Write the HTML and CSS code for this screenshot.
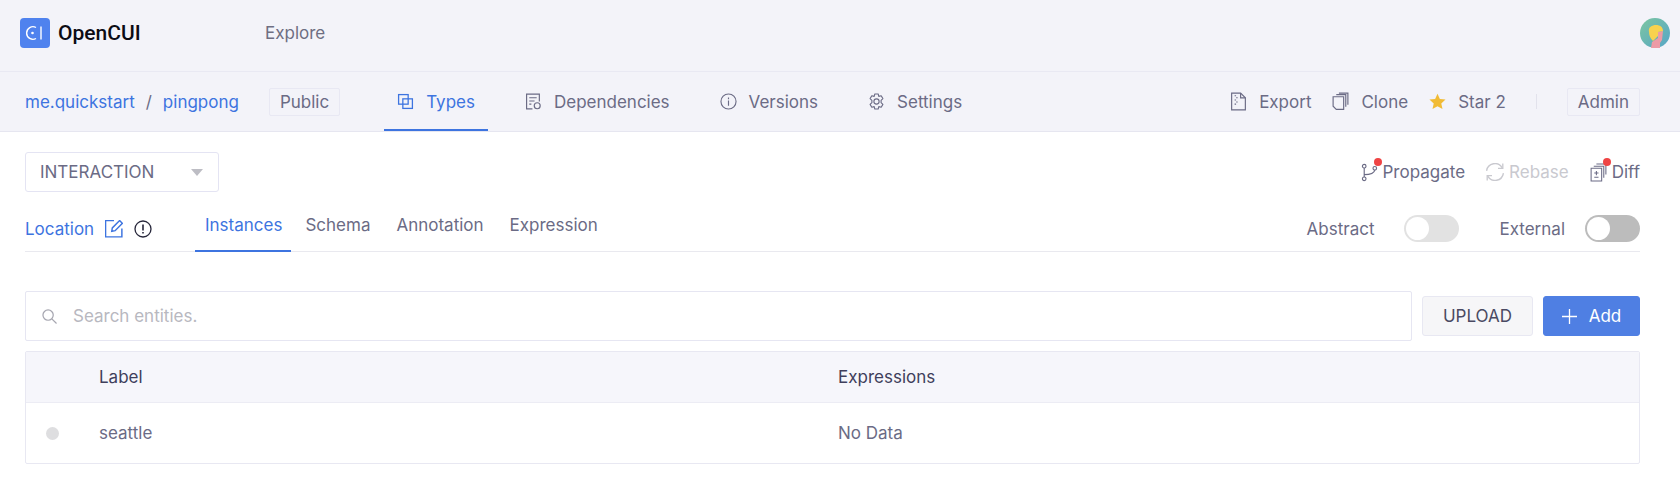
FILE: index.html
```html
<!DOCTYPE html>
<html lang="en">
<head>
    <meta charset="UTF-8" />
    <title>OpenCUI - pingpong</title>
    <link rel="stylesheet" href="styles.css">
</head>
<body>

<header class="topbar">
    <a class="brand">
        <span class="brand-logo">
            <svg width="22" height="18" viewBox="0 0 22 18" fill="none" stroke="#fff" stroke-width="1.4">
                <path d="M12 3.500A6.300 6.300 0 1 0 12 14.500"/>
                <circle cx="8.500" cy="9" r="1.300" fill="#fff" stroke="none"/>
                <path d="M17 2.500V15.500"/>
            </svg>
        </span>
        <span class="brand-name">OpenCUI</span>
    </a>
    <a class="topbar-link">Explore</a>
    <span class="avatar">
        <svg width="30" height="30" viewBox="0 0 30 30">
            <defs>
                <linearGradient id="avatar-bg" x1="0" y1="0" x2="1" y2="1">
                    <stop offset="0" stop-color="#7cc6a0"/>
                    <stop offset="1" stop-color="#56a5c8"/>
                </linearGradient>
            </defs>
            <circle cx="15" cy="15" r="15" fill="url(#avatar-bg)"/>
            <path d="M11 30L12 24L18 20L18 14L23 13L22 22L20 25V30Z" fill="#ec9ba6"/>
            <path d="M9 14C8 9 12 7 16 7C20 7 23 9 23 13L18 14L18 18L13 23C10 20 9 17 9 14Z" fill="#f8d24e"/>
        </svg>
    </span>
</header>

<nav class="subnav">
    <div class="crumbs">
        <a>me.quickstart</a>
        <span class="crumb-sep">/</span>
        <a>pingpong</a>
    </div>
    <span class="tag tag-public">Public</span>
    <div class="tabs">
        <a class="tab active">
            <svg class="icon" viewBox="0 0 16 16" fill="none" stroke="currentColor" stroke-width="1.2">
                <rect x="1.500" y="1.500" width="9" height="9"/>
                <rect x="5.500" y="5.500" width="9" height="9"/>
            </svg>
            Types
        </a>
        <a class="tab">
            <svg class="icon" viewBox="0 0 16 16" fill="none" stroke="currentColor" stroke-width="1.1">
                <path d="M7 15H1.500V1H13.500V8"/>
                <path d="M4 4.500H11M4 7.500H9M4 10.500H6"/>
                <circle cx="11.500" cy="12" r="2.800"/>
            </svg>
            Dependencies
        </a>
        <a class="tab">
            <svg class="icon" viewBox="0 0 18 18" fill="none" stroke="currentColor" stroke-width="1.2">
                <circle cx="9" cy="9" r="8"/>
                <path d="M9 8V13.500M9 4.800V6.500"/>
            </svg>
            Versions
        </a>
        <a class="tab">
            <svg class="icon" viewBox="1 .5 16 17" fill="none" stroke="currentColor" stroke-width="1.1">
                <path d="M7.300 1.500H10.700L11.300 3.900L13.700 3.200L15.400 6.100L13.600 7.800V10.200L15.400 11.900L13.700 14.800L11.300 14.100L10.700 16.500H7.300L6.700 14.100L4.300 14.800L2.600 11.900L4.400 10.200V7.800L2.600 6.100L4.300 3.200L6.700 3.900Z" stroke-linejoin="round"/>
                <circle cx="9" cy="9" r="2.600"/>
            </svg>
            Settings
        </a>
    </div>
    <div class="subnav-actions">
        <a class="action">
            <svg class="icon icon-tall" viewBox="0 0 16 18" fill="none" stroke="currentColor" stroke-width="1.1">
                <path d="M1.500 1H10L14.500 5.500V17H1.500Z"/>
                <path d="M10 1V5.500H14.500"/>
                <path d="M5 3V4M6.500 5V6M5 7V8M6.500 9V10M5 11V12" stroke-width="1.400"/>
            </svg>
            Export
        </a>
        <a class="action">
            <svg class="icon icon-tall" viewBox="0 0 16 18" fill="none" stroke="currentColor" stroke-width="1.1">
                <path d="M1 4.500H11V16.500H4L1 13.500Z"/>
                <path d="M4 2.500H13V14"/>
                <path d="M6.500 1H15V12"/>
            </svg>
            Clone
        </a>
        <a class="action">
            <svg class="icon" viewBox="0 0 18 18">
                <path d="M9 .8L11.500 6.300L17.500 7L13 11L14.300 17L9 14L3.700 17L5 11L.5 7L6.500 6.300Z" fill="#f1bb35"/>
            </svg>
            Star 2
        </a>
        <span class="action-divider"></span>
        <span class="tag tag-admin">Admin</span>
    </div>
</nav>

<main class="content">
    <div class="toolbar">
        <div class="select">
            <span>INTERACTION</span>
            <span class="select-arrow"></span>
        </div>
        <div class="toolbar-actions">
            <a class="tool">
                <span class="tool-icon">
                    <svg class="icon icon-tall" viewBox="0 0 16 18" fill="none" stroke="currentColor" stroke-width="1.1">
                        <circle cx="3" cy="3" r="1.700"/>
                        <circle cx="3" cy="15" r="1.700"/>
                        <circle cx="13" cy="5" r="1.700"/>
                        <path d="M3 4.700V13.300M3 11C9 11 12.500 9.500 13 6.700"/>
                    </svg>
                    <i class="badge-dot"></i>
                </span>
                Propagate
            </a>
            <a class="tool disabled">
                <span class="tool-icon">
                    <svg class="icon icon-lg" viewBox="1.500 1.500 15 15" fill="none" stroke="currentColor" stroke-width="1.1">
                        <path d="M2 8A7 7 0 0 1 15 5.500M16 10A7 7 0 0 1 3 12.500"/>
                        <path d="M15.500 2V6H11.500M2.500 16V12H6.500"/>
                    </svg>
                </span>
                Rebase
            </a>
            <a class="tool">
                <span class="tool-icon">
                    <svg class="icon icon-tall" viewBox="0 0 16 18" fill="none" stroke="currentColor" stroke-width="1">
                        <path d="M1 5H11V17H1Z"/>
                        <path d="M3.500 3H13V14M6 1H15V11"/>
                        <path d="M6 7.500V11.500M4 9.500H8M4 13.500H8"/>
                    </svg>
                    <i class="badge-dot"></i>
                </span>
                Diff
            </a>
        </div>
    </div>

    <div class="subtabs-row">
        <div class="location">
            <a>Location</a>
            <svg class="icon icon-lg" viewBox="1 1.500 16 16" fill="none" stroke="currentColor" stroke-width="1.300">
                <path d="M9 2H1.500V16.500H16V9"/>
                <path d="M7 11.500L7.500 8.500L14 2L16.500 4.500L10 11Z"/>
            </svg>
            <svg class="icon icon-lg icon-dark" viewBox="0 0 18 18" fill="none" stroke="currentColor" stroke-width="1.300">
                <circle cx="9" cy="9" r="8"/>
                <path d="M9 4.500V10.500M9 12V13.500" stroke-width="1.600"/>
            </svg>
        </div>
        <div class="subtabs">
            <a class="subtab active">Instances</a>
            <a class="subtab">Schema</a>
            <a class="subtab">Annotation</a>
            <a class="subtab">Expression</a>
        </div>
        <div class="switches">
            <label class="switch-item">
                Abstract
                <span class="switch switch-light"><i></i></span>
            </label>
            <label class="switch-item">
                External
                <span class="switch"><i></i></span>
            </label>
        </div>
    </div>

    <div class="search-row">
        <div class="search">
            <svg class="search-icon" viewBox="0 0 16 16" fill="none" stroke="currentColor" stroke-width="1.300">
                <circle cx="6.500" cy="6.500" r="5.500"/>
                <path d="M10.500 10.500L15.500 15.500"/>
            </svg>
            <input type="text" placeholder="Search entities." />
        </div>
        <button class="btn">UPLOAD</button>
        <button class="btn btn-primary">
            <svg class="btn-plus" viewBox="0 0 15 15" stroke="#fff" stroke-width="1.300">
                <path d="M7.500 0V15M0 7.500H15"/>
            </svg>
            Add
        </button>
    </div>

    <div class="table">
        <div class="table-row table-head">
            <span class="cell-dot"></span>
            <span class="cell-label">Label</span>
            <span>Expressions</span>
        </div>
        <div class="table-row table-body">
            <span class="cell-dot"><i></i></span>
            <span class="cell-label">seattle</span>
            <span>No Data</span>
        </div>
    </div>
</main>

</body>
</html>
```

FILE: styles.css
```css
* {
    box-sizing: border-box;
}
body {
    margin: 0;
    font-family: Inter, 'Noto Sans', sans-serif;
    font-size: 17px;
    color: #6b6b85;
    background-color: #fff;
}
a {
    text-decoration: none;
    color: inherit;
}
.icon {
    width: 17px;
    height: 17px;
    flex: none;
}
.icon-tall {
    height: 19px;
}
.icon-lg {
    width: 18px;
    height: 18px;
}
.topbar {
    display: flex;
    align-items: center;
    height: 72px;
    padding: 0 10px 5px 20px;
    background-color: #f3f3f9;
    border-bottom: 1px solid #e9e9f3;
}
.brand {
    display: flex;
    align-items: center;
    gap: 8px;
    width: 245px;
}
.brand-logo {
    display: flex;
    align-items: center;
    justify-content: center;
    width: 30px;
    height: 30px;
    background-color: #4f82ee;
    border-radius: 4px;
}
.brand-name {
    font-family: Roboto, sans-serif;
    font-size: 21px;
    font-weight: 500;
    color: #0c0c14;
}
.topbar-link {
    color: #6e6e82;
}
.avatar {
    display: flex;
    margin-left: auto;
}
.subnav {
    display: flex;
    align-items: center;
    height: 60px;
    padding: 0 40px 0 25px;
    background-color: #f3f3f9;
    border-bottom: 1px solid #e6e6f0;
}
.crumbs {
    display: flex;
    gap: 11px;
    color: #3d74e0;
}
.crumb-sep {
    color: #6b6b85;
}
.tag {
    display: flex;
    align-items: center;
    border: 1px solid #e8e8f3;
    border-radius: 2px;
    height: 28px;
    padding: 0 10px;
}
.tag-public {
    margin-left: 30px;
}
.tabs {
    display: flex;
    align-self: stretch;
    gap: 24px;
    margin-left: 44px;
}
.tab {
    display: flex;
    align-items: center;
    gap: 12px;
    padding: 2px 13px 0;
    border-bottom: 2px solid transparent;
}
.tab.active {
    color: #3d74e0;
    border-bottom-color: #3d74e0;
}
.subnav-actions {
    display: flex;
    align-items: center;
    margin-left: auto;
}
.action {
    display: flex;
    align-items: center;
    gap: 12px;
    margin-right: 21px;
}
.action-divider {
    width: 1px;
    height: 15px;
    margin: 0 30px 0 9px;
    background-color: #e2e2ec;
}
.content {
    padding: 0 40px 0 25px;
}
.toolbar {
    display: flex;
    align-items: center;
    justify-content: space-between;
    height: 60px;
    padding-top: 20px;
}
.select {
    display: flex;
    align-items: center;
    justify-content: space-between;
    width: 194px;
    height: 40px;
    padding: 0 15px 0 14px;
    border: 1px solid #e4e4f3;
    border-radius: 3px;
}
.select-arrow {
    width: 0;
    height: 0;
    border-left: 6px solid transparent;
    border-right: 6px solid transparent;
    border-top: 7px solid #bdbdc4;
}
.toolbar-actions {
    display: flex;
    gap: 21px;
}
.tool {
    display: flex;
    align-items: center;
    gap: 5px;
}
.tool.disabled {
    color: #c9c9cf;
}
.tool-icon {
    position: relative;
    display: flex;
}
.badge-dot {
    position: absolute;
    top: -5px;
    right: -4px;
    width: 8px;
    height: 8px;
    border-radius: 50%;
    background-color: #ef4444;
}
.subtabs-row {
    display: flex;
    height: 60px;
    padding-top: 14px;
    border-bottom: 1px solid #e9e9ef;
}
.location {
    display: flex;
    align-items: center;
    gap: 11px;
    width: 170px;
    color: #3d74e0;
}
.icon-dark {
    color: #26263a;
}
.subtabs {
    display: flex;
    gap: 6px;
}
.subtab {
    display: flex;
    align-items: center;
    padding: 0 10px 6px;
    margin-bottom: -1px;
    border-bottom: 2px solid transparent;
}
.subtab.active {
    padding-right: 9px;
    margin-right: -2px;
    color: #3d74e0;
    border-bottom-color: #3d74e0;
}
.switches {
    display: flex;
    align-items: center;
    gap: 40px;
    margin-left: auto;
}
.switch-item {
    display: flex;
    align-items: center;
    gap: 20px;
}
.switch-item:first-child {
    gap: 30px;
}
.switch {
    display: block;
    position: relative;
    width: 55px;
    height: 27px;
    padding: 2px;
    border-radius: 14px;
    background-color: #bcbcbc;
}
.switch-light {
    background-color: #e2e2e2;
}
.switch i {
    display: block;
    width: 23px;
    height: 23px;
    border-radius: 50%;
    background-color: #fff;
}
.search-row {
    display: flex;
    align-items: center;
    gap: 10px;
    margin-top: 39px;
}
.search {
    display: flex;
    align-items: center;
    flex: 1;
    gap: 16px;
    height: 50px;
    padding-left: 16px;
    border: 1px solid #e6e6f2;
    border-radius: 2px;
}
.search-icon {
    width: 15px;
    height: 15px;
    color: #a6a6b0;
}
.search input {
    flex: 1;
    padding: 0;
    border: none;
    outline: none;
    font: inherit;
}
.search input::placeholder {
    color: #b8b8c0;
}
.btn {
    height: 40px;
    border: 1px solid #e8e8f2;
    border-radius: 3px;
    background-color: #f6f6f8;
    font: inherit;
    color: #4a4a62;
    width: 111px;
}
.btn-primary {
    display: flex;
    align-items: center;
    justify-content: center;
    gap: 12px;
    width: 97px;
    border-color: #4f7fe3;
    background-color: #4f7fe3;
    color: #fff;
}
.btn-plus {
    width: 15px;
    height: 15px;
}
.table {
    margin-top: 10px;
    border: 1px solid #e8e8f2;
    border-radius: 2px;
}
.table-row {
    display: grid;
    grid-template-columns: 73px 739px 1fr;
    align-items: center;
}
.table-head {
    height: 51px;
    background-color: #f6f6fb;
    border-bottom: 1px solid #ececf4;
    color: #3f3f5c;
}
.table-body {
    height: 60px;
}
.cell-dot {
    display: flex;
    padding-left: 20px;
}
.cell-dot i {
    width: 13px;
    height: 13px;
    border-radius: 50%;
    background-color: #dedee0;
}
```
